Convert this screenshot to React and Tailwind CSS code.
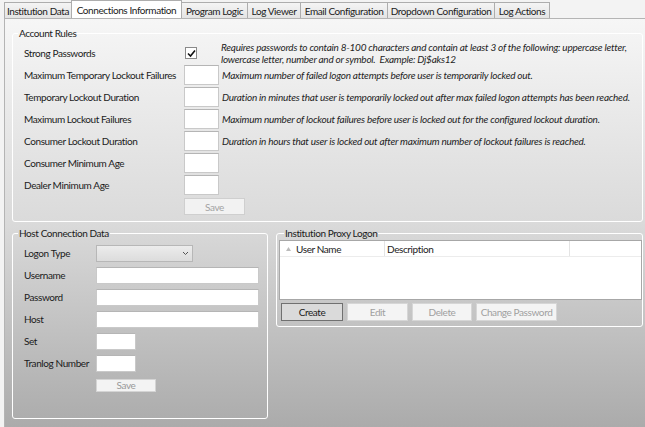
import React from "react";

const tabs = [
  ["Institution Data", 68],
  ["Connections Information", 111],
  ["Program Logic", 67],
  ["Log Viewer", 54],
  ["Email Configuration", 88],
  ["Dropdown Configuration", 108],
  ["Log Actions", 56],
];

const rules = [
  ["Maximum Temporary Lockout Failures", "Maximum number of failed logon attempts before user is temporarily locked out."],
  ["Temporary Lockout Duration", "Duration in minutes that user is temporarily locked out after max failed logon attempts has been reached."],
  ["Maximum Lockout Failures", "Maximum number of lockout failures before user is locked out for the configured lockout duration."],
  ["Consumer Lockout Duration", "Duration in hours that user is locked out after maximum number of lockout failures is reached."],
  ["Consumer Minimum Age", ""],
  ["Dealer Minimum Age", ""],
];

const hostRows = [
  ["Username", "w-[163px]"],
  ["Password", "w-[163px]"],
  ["Host", "w-[163px]"],
  ["Set", "w-[40px]"],
  ["Tranlog Number", "w-[40px]"],
];

const TextBox = ({ className = "" }) => (
  <div className={"bg-white border border-[#c9c9c9] border-t-[#b5b5b5] " + className} />
);

const App = () => {
  return (
    <div
      className="w-[645px] h-[427px] overflow-hidden bg-[#f3f3f3] text-[10px] leading-[12px] tracking-[-0.4px] text-[#1b1b1b] flex flex-col whitespace-nowrap"
      style={{ fontFamily: "Lato, 'Liberation Sans', sans-serif" }}
    >
      {/* Tab strip */}
      <div className="h-[18px] flex items-end pl-[4px] shrink-0">
        {tabs.map(([name, w], i) => (
          <div
            key={name}
            className={
              "flex items-center justify-center border border-b-0 border-[#adadad] -ml-px first:ml-0 " +
              (i === 1
                ? "h-[18px] bg-white relative z-10"
                : "h-[16px] bg-linear-to-b from-[#f4f4f4] to-[#e4e4e4]")
            }
            style={{ width: w }}
          >
            {name}
          </div>
        ))}
      </div>

      {/* Tab page */}
      <div className="flex-1 border-l border-t border-[#b4b4b4] ml-[4px] bg-linear-to-b from-[#f6f6f6] via-[#dadada] to-[#ababab] pl-[7px] pr-[2px] pt-[8px]">
        {/* Account Rules */}
        <fieldset className="border border-white rounded-[3px] w-[631px] pt-[3px] pb-[4px]">
          <legend className="ml-[5px] px-px">Account Rules</legend>
          <div className="flex items-center h-[22px]">
            <div className="w-[172px] pl-[11px]">Strong Passwords</div>
            <div className="w-[12px] h-[12px] bg-white border border-[#8a8a8a] flex items-center justify-center">
              <svg width="9" height="9" viewBox="0 0 9 9">
                <path d="M1 4.5 L3.5 7 L8 1.5" fill="none" stroke="#111" strokeWidth="1.6" />
              </svg>
            </div>
            <div className="ml-[24px] italic leading-[12px] tracking-[-0.25px] text-[#1e1e1e]">
              Requires passwords to contain 8-100 characters and contain at least 3 of the following: uppercase letter,
              <br />
              lowercase letter, number and or symbol.&nbsp; Example: Dj$aks12
            </div>
          </div>
          {rules.map(([label, desc]) => (
            <div key={label} className="flex items-center h-[22px]">
              <div className="w-[171px] pl-[11px]">{label}</div>
              <TextBox className="w-[35px] h-[20px] shrink-0" />
              <div className="ml-[3px] italic tracking-[-0.25px] text-[#1e1e1e]">{desc}</div>
            </div>
          ))}
          <div className="flex items-center h-[21px] pl-[171px]">
            <div className="w-[61px] h-[17px] border border-[#cfcfcf] bg-[#f2f2f2] text-[#a3a3a3] flex items-center justify-center">
              Save
            </div>
          </div>
        </fieldset>

        <div className="flex gap-[8px] mt-[5px] items-start">
          {/* Host Connection Data */}
          <fieldset className="border border-white rounded-[3px] w-[256px] pt-[3px] pb-[22px]">
            <legend className="ml-[5px] px-px">Host Connection Data</legend>
            <div className="flex items-center h-[22px]">
              <div className="w-[83px] pl-[11px]">Logon Type</div>
              <div className="w-[97px] h-[17px] border border-[#b7b7b7] bg-linear-to-b from-[#ececec] to-[#dcdcdc] flex items-center justify-end pr-[3px]">
                <svg width="7" height="5" viewBox="0 0 7 5">
                  <path d="M1 1 L3.5 3.5 L6 1" fill="none" stroke="#555" strokeWidth="1" />
                </svg>
              </div>
            </div>
            {hostRows.map(([label, w]) => (
              <div key={label} className="flex items-center h-[22px]">
                <div className="w-[83px] pl-[11px]">{label}</div>
                <TextBox className={w + " h-[17px]"} />
              </div>
            ))}
            <div className="flex items-center h-[22px] pl-[83px]">
              <div className="w-[60px] h-[13px] border border-[#d4d4d4] bg-[#f3f3f3] text-[#999] flex items-center justify-center">
                Save
              </div>
            </div>
          </fieldset>

          {/* Institution Proxy Logon */}
          <fieldset className="border border-white rounded-[3px] w-[367px] pl-[2px] pt-[1px] pb-[5px]">
            <legend className="ml-[5px] px-px">Institution Proxy Logon</legend>
            <div className="h-[60px] bg-white border border-[#a7a7a7]">
              <div className="flex h-[16px] border-b border-[#ececec] text-[#222]">
                <div className="w-[105px] border-r border-[#e4e4e4] flex items-center pl-[6px]">
                  <svg width="5" height="4" viewBox="0 0 5 4" className="mr-[5px]">
                    <path d="M0 4 L2.5 0 L5 4 Z" fill="#bbb" />
                  </svg>
                  User Name
                </div>
                <div className="w-[185px] border-r border-[#e4e4e4] flex items-center pl-[2px]">Description</div>
              </div>
            </div>
            <div className="flex items-center gap-[4px] mt-[3px] pl-[2px]">
              <div className="w-[62px] h-[18px] border border-[#707070] bg-[#dadada] flex items-center justify-center">Create</div>
              <div className="w-[61px] h-[18px] border border-[#d6d6d6] bg-[#f4f4f4] text-[#a0a0a0] flex items-center justify-center">Edit</div>
              <div className="w-[60px] h-[18px] border border-[#d6d6d6] bg-[#f4f4f4] text-[#a0a0a0] flex items-center justify-center">Delete</div>
              <div className="w-[81px] h-[18px] border border-[#d6d6d6] bg-[#f4f4f4] text-[#a0a0a0] flex items-center justify-center">Change Password</div>
            </div>
          </fieldset>
        </div>
      </div>
    </div>
  );
};

export default App;
